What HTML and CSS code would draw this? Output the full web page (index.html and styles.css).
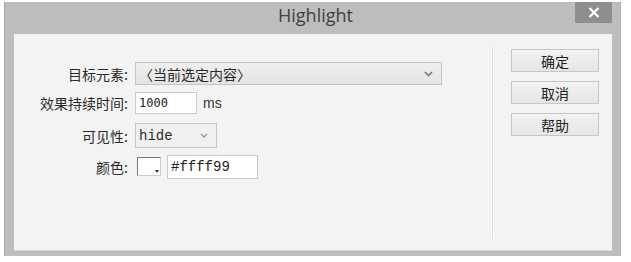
FILE: index.html
```html
<!DOCTYPE html>
<html lang="zh-CN">
<head>
  <meta charset="UTF-8">
  <title>Highlight</title>
  <link rel="stylesheet" href="styles.css">
</head>
<body>
  <div class="window">
    <div class="titlebar">
      <div class="title">Highlight</div>
      <div class="close-btn">
        <svg width="12" height="11" viewBox="0 0 12 11"><path d="M1.5 1 L10.5 10 M10.5 1 L1.5 10" stroke="#fff" stroke-width="2.2"/></svg>
      </div>
    </div>

    <div class="panel">
      <div class="form">
        <div class="row row-target">
          <div class="label">目标元素:</div>
          <div class="select select-wide">
            <span>〈当前选定内容〉</span>
            <svg class="chev" width="9" height="6" viewBox="0 0 9 6"><path d="M1 1 L4.5 4.5 L8 1" fill="none" stroke="#777" stroke-width="1.6"/></svg>
          </div>
        </div>
        <div class="row row-duration">
          <div class="label">效果持续时间:</div>
          <div class="input input-time">1000</div>
          <div class="unit">ms</div>
        </div>
        <div class="row row-visible">
          <div class="label">可见性:</div>
          <div class="select select-small">
            <span class="mono">hide</span>
            <svg class="chev" width="8" height="5" viewBox="0 0 8 5"><path d="M1 1 L4 4 L7 1" fill="none" stroke="#999" stroke-width="1.4"/></svg>
          </div>
        </div>
        <div class="row row-color">
          <div class="label">颜色:</div>
          <div class="swatch"><span class="swatch-arrow"></span></div>
          <div class="input input-color mono">#ffff99</div>
        </div>
      </div>

      <div class="separator"></div>

      <div class="buttons">
        <div class="btn">确定</div>
        <div class="btn">取消</div>
        <div class="btn">帮助</div>
      </div>
    </div>
  </div>
</body>
</html>
```

FILE: styles.css
```css
body {
  margin: 0;
  padding: 2px 0 0 4px;
  background: #ffffff;
  font-family: "Noto Sans CJK SC", "Liberation Sans", sans-serif;
  color: #222;
}

.window {
  width: 617px;
  height: 254px;
  box-sizing: border-box;
  background: #bdbdbd;
  border-left: 1px solid #a8a8a8;
  border-right: 1px solid #b0b0b0;
  display: flex;
  flex-direction: column;
}

.titlebar {
  height: 32px;
  position: relative;
  display: flex;
  justify-content: center;
}

.title {
  font-family: "Open Sans", "Liberation Sans", sans-serif;
  font-size: 18px;
  color: #404040;
  padding-top: 1px;
  padding-left: 6px;
}

.close-btn {
  position: absolute;
  top: 0;
  right: 8px;
  width: 37px;
  height: 21px;
  background: #8e8e8e;
  display: flex;
  align-items: center;
  justify-content: center;
}

.panel {
  margin: 0 8px 0 9px;
  height: 216px;
  background: #f3f3f3;
  border-bottom: 1px solid #d8d8d8;
  display: flex;
}

.form {
  width: 478px;
  padding-top: 28px;
  display: flex;
  flex-direction: column;
}

.row {
  display: flex;
  align-items: center;
}

.row-target { height: 23px; }
.row-duration { height: 22px; margin-top: 7px; }
.row-visible { height: 25px; margin-top: 9px; }
.row-color { height: 25px; margin-top: 6px; }

.label {
  width: 114px;
  margin-right: 7px;
  text-align: right;
  font-size: 14px;
  color: #2a2a2a;
  white-space: nowrap;
}

.select {
  height: 100%;
  box-sizing: border-box;
  border: 1px solid #c4c4c4;
  background: linear-gradient(#efefef, #e4e4e4);
  display: flex;
  align-items: center;
  justify-content: space-between;
  padding: 0 8px 0 3px;
  font-size: 14px;
  color: #2a2a2a;
}

.select-wide { width: 307px; }
.select-small { width: 82px; background: #f0f0f0; }

.input {
  height: 100%;
  box-sizing: border-box;
  background: #fff;
  border: 1px solid #cacaca;
  display: flex;
  align-items: center;
  padding-left: 3px;
  font-size: 12px;
  color: #222;
}

.input-time {
  width: 62px;
  font-family: "DejaVu Sans Mono", monospace;
  font-size: 12px;
}

.unit {
  margin-left: 6px;
  font-family: "Liberation Sans", sans-serif;
  font-size: 14px;
  color: #333;
}

.mono {
  font-family: "Liberation Mono", monospace;
  font-size: 14px;
}

.swatch {
  width: 22px;
  height: 17px;
  margin: 0 6px 0 2px;
  background: #fff;
  border: 1px solid #777;
  border-right-color: #ccc;
  border-bottom-color: #ccc;
  position: relative;
}

.swatch-arrow {
  position: absolute;
  right: 1px;
  bottom: 2px;
  width: 0;
  height: 0;
  border-left: 2px solid transparent;
  border-right: 2px solid transparent;
  border-top: 3px solid #333;
}

.input-color {
  width: 91px;
  height: 24px;
  margin-top: 1px;
}

.separator {
  width: 1px;
  margin: 13px 0 11px 0;
  background: #dcdcdc;
  border-right: 1px solid #ffffff;
}

.buttons {
  padding: 15px 0 0 17px;
  display: flex;
  flex-direction: column;
  gap: 9px;
}

.btn {
  width: 88px;
  height: 23px;
  box-sizing: border-box;
  border: 1px solid #c6c6c6;
  background: linear-gradient(#f2f2f2, #e6e6e6);
  display: flex;
  align-items: center;
  justify-content: center;
  font-size: 14px;
  color: #222;
}
```
